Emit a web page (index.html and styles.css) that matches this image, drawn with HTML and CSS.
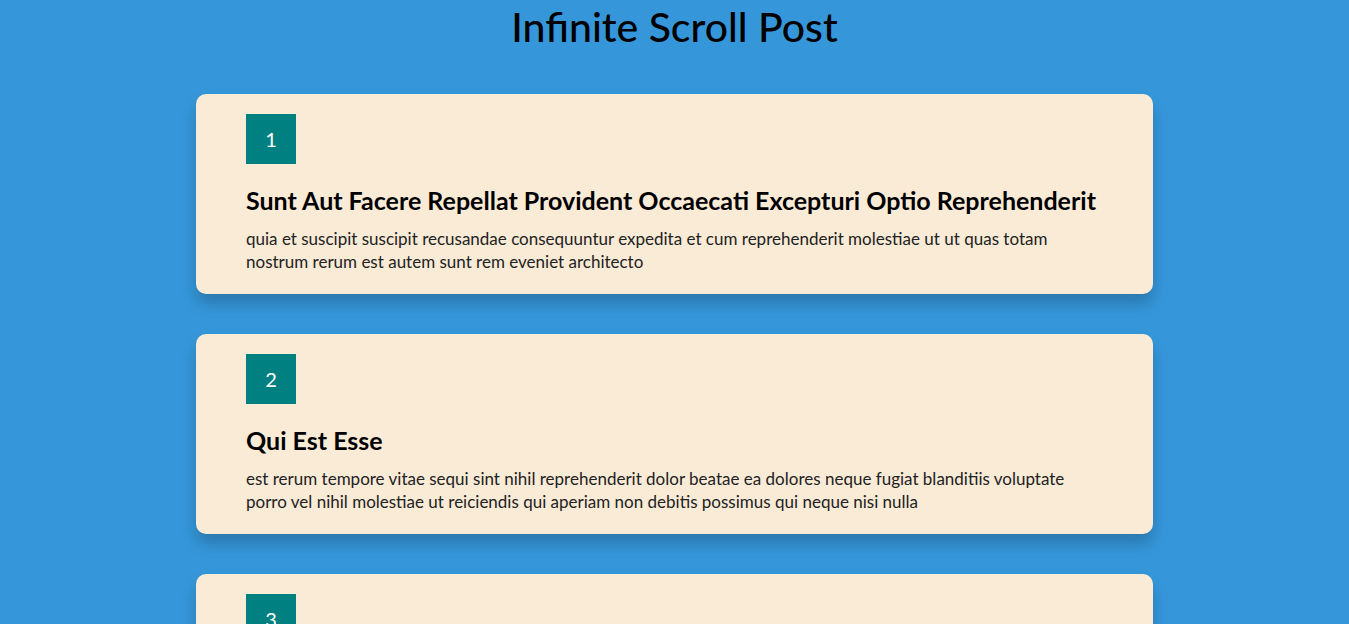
FILE: index.html
```html
<!DOCTYPE html>
<html lang="en">
<head>
<meta charset="UTF-8">
<title>Infinite Scroll Post</title>
<link rel="stylesheet" href="styles.css">
</head>
<body>
<h1 class="page-title">Infinite Scroll Post</h1>
<main class="posts">
  <article class="post">
    <div class="post-number">1</div>
    <h2 class="post-title">Sunt Aut Facere Repellat Provident Occaecati Excepturi Optio Reprehenderit</h2>
    <p class="post-body">quia et suscipit suscipit recusandae consequuntur expedita et cum reprehenderit molestiae ut ut quas totam nostrum rerum est autem sunt rem eveniet architecto</p>
  </article>
  <article class="post">
    <div class="post-number">2</div>
    <h2 class="post-title">Qui Est Esse</h2>
    <p class="post-body">est rerum tempore vitae sequi sint nihil reprehenderit dolor beatae ea dolores neque fugiat blanditiis voluptate porro vel nihil molestiae ut reiciendis qui aperiam non debitis possimus qui neque nisi nulla</p>
  </article>
  <article class="post">
    <div class="post-number">3</div>
    <h2 class="post-title">Ea Molestias Quasi Exercitationem Repellat Qui Ipsa Sit Aut</h2>
    <p class="post-body">et iusto sed quo iure voluptatem occaecati omnis eligendi aut ad voluptatem doloribus vel accusantium quis pariatur molestiae porro eius odio et labore et velit aut</p>
  </article>
</main>
</body>
</html>
```

FILE: styles.css
```css
* { box-sizing: border-box; }

body {
  margin: 0;
  background: #3597da;
  font-family: "Lato", "Noto Sans", sans-serif;
  color: #000;
}

.page-title {
  margin: 0;
  padding-top: 3px;
  text-align: center;
  font-size: 41px;
  font-weight: 500;
  line-height: 48px;
}

.posts {
  display: flex;
  flex-direction: column;
  align-items: center;
  gap: 40px;
  padding-top: 43px;
}

.post {
  width: 957px;
  background: #faebd7;
  border-radius: 10px;
  padding: 20px 50px 21px 50px;
  box-shadow: 0 10px 15px rgba(0, 0, 0, 0.2);
}

.post-number {
  width: 50px;
  height: 50px;
  background: #008080;
  color: #fff;
  font-size: 20px;
  display: flex;
  align-items: center;
  justify-content: center;
}

.post-title {
  margin: 20px 0 11px;
  font-size: 25px;
  font-weight: 700;
  line-height: 32px;
}

.post-body {
  margin: 0;
  font-size: 17px;
  line-height: 23px;
  color: #222;
}
```
